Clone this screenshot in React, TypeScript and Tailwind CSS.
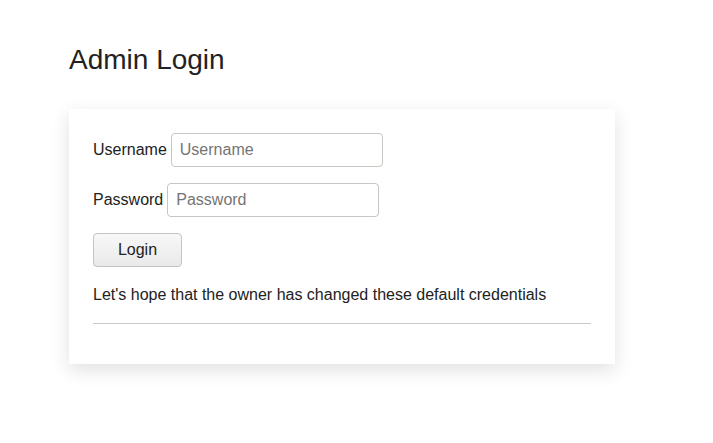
import React from 'react';

export default function App() {
  return (
    <div className="min-h-screen bg-white font-['Liberation_Sans',Arial,sans-serif] text-[#222]">
      <div className="px-[69px] pt-[43px]">
        {/* 제목 */}
        <h1 className="text-[28px] leading-[34px] mb-[32px]">Admin Login</h1>

        {/* 로그인 카드 */}
        <div className="w-[546px] bg-white p-6 shadow-[0_6px_18px_rgba(0,0,0,0.12)]">
          <form className="flex flex-col gap-4 text-base">
            <div className="flex items-center gap-1">
              <label>Username</label>
              <input
                className="w-[212px] h-[34px] px-2 border border-[#c9c5c1] rounded text-base placeholder:text-[#757575] outline-none"
                placeholder="Username"
              />
            </div>
            <div className="flex items-center gap-1">
              <label>Password</label>
              <input
                type="password"
                className="w-[212px] h-[34px] px-2 border border-[#c9c5c1] rounded text-base placeholder:text-[#757575] outline-none"
                placeholder="Password"
              />
            </div>
            <div>
              <button
                type="button"
                className="w-[89px] h-[34px] border border-[#c4c4c4] rounded bg-gradient-to-b from-[#f8f8f8] to-[#e9e9e9] text-base text-[#222]"
              >
                Login
              </button>
            </div>
          </form>
          <p className="mt-4 leading-6">Let's hope that the owner has changed these default credentials</p>
          <hr className="mt-4 mb-4 border-t border-[#c8c8c8]" />
        </div>
      </div>
    </div>
  );
}
